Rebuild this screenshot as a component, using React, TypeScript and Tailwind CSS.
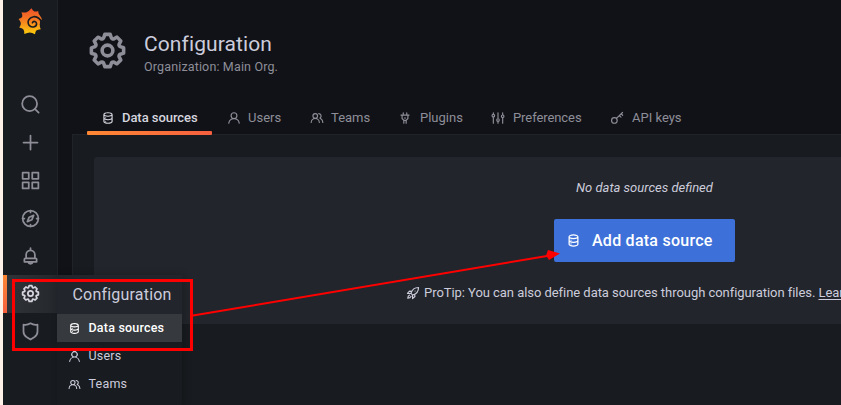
import React from "react";

type IconProps = { className?: string };

const COG =
  "M21.32,9.55l-1.89-.63.89-1.78A1,1,0,0,0,20.13,6L18,3.87a1,1,0,0,0-1.15-.19l-1.78.89-.63-1.89A1,1,0,0,0,13.5,2h-3a1,1,0,0,0-.95.68L8.92,4.57,7.14,3.68A1,1,0,0,0,6,3.87L3.87,6a1,1,0,0,0-.19,1.15l.89,1.78-1.89.63A1,1,0,0,0,2,10.5v3a1,1,0,0,0,.68.95l1.89.63-.89,1.78A1,1,0,0,0,3.87,18L6,20.13a1,1,0,0,0,1.15.19l1.78-.89.63,1.89a1,1,0,0,0,.95.68h3a1,1,0,0,0,.95-.68l.63-1.89,1.78.89A1,1,0,0,0,18,20.13L20.13,18a1,1,0,0,0,.19-1.15l-.89-1.78,1.89-.63A1,1,0,0,0,22,13.5v-3A1,1,0,0,0,21.32,9.55ZM20,12.78l-1.2.4A2,2,0,0,0,17.64,16l.57,1.14-1.1,1.1L16,17.64a2,2,0,0,0-2.79,1.16l-.4,1.2H11.22l-.4-1.2A2,2,0,0,0,8,17.64l-1.14.57-1.1-1.1L6.36,16A2,2,0,0,0,5.2,13.18L4,12.78V11.22l1.2-.4A2,2,0,0,0,6.36,8L5.79,6.89l1.1-1.1L8,6.36A2,2,0,0,0,10.82,5.2l.4-1.2h1.56l.4,1.2A2,2,0,0,0,16,6.36l1.14-.57,1.1,1.1L17.64,8a2,2,0,0,0,1.16,2.79l1.2.4ZM12,8a4,4,0,1,0,4,4A4,4,0,0,0,12,8Zm0,6a2,2,0,1,1,2-2A2,2,0,0,1,12,14Z";
const DATABASE =
  "M8,16.5a1,1,0,1,0,1,1A1,1,0,0,0,8,16.5ZM12,2C8,2,4,3.37,4,6V18c0,2.63,4,4,8,4s8-1.37,8-4V6C20,3.37,16,2,12,2Zm6,16c0,.71-2.28,2-6,2s-6-1.29-6-2V14.73A13.16,13.16,0,0,0,12,16a13.16,13.16,0,0,0,6-1.27Zm0-6c0,.71-2.28,2-6,2s-6-1.29-6-2V8.73A13.16,13.16,0,0,0,12,10a13.16,13.16,0,0,0,6-1.27ZM12,8C8.28,8,6,6.71,6,6s2.28-2,6-2,6,1.29,6,2S15.72,8,12,8ZM8,10.5a1,1,0,1,0,1,1A1,1,0,0,0,8,10.5Z";
const USER =
  "M15.71,12.71a6,6,0,1,0-7.42,0,10,10,0,0,0-6.22,8.18,1,1,0,0,0,2,.22,8,8,0,0,1,15.9,0,1,1,0,0,0,1,.89h.11a1,1,0,0,0,.88-1.1A10,10,0,0,0,15.71,12.71ZM12,12a4,4,0,1,1,4-4A4,4,0,0,1,12,12Z";
const USERS =
  "M12.3,12.22A4.92,4.92,0,0,0,14,8.5a5,5,0,0,0-10,0,4.92,4.92,0,0,0,1.7,3.72A8,8,0,0,0,1,19.5a1,1,0,0,0,2,0,6,6,0,0,1,12,0,1,1,0,0,0,2,0A8,8,0,0,0,12.3,12.22ZM9,11.5a3,3,0,1,1,3-3A3,3,0,0,1,9,11.5Zm9.74.32A5,5,0,0,0,15,3.5a1,1,0,0,0,0,2,3,3,0,0,1,3,3,3,3,0,0,1-1.5,2.59,1,1,0,0,0-.5.84,1,1,0,0,0,.45.86l.39.26.13.07a7,7,0,0,1,4,6.38,1,1,0,0,0,2,0A9,9,0,0,0,18.74,11.82Z";
const PLUG =
  "M19,6H16V3a1,1,0,0,0-2,0V6H10V3A1,1,0,0,0,8,3V6H5A1,1,0,0,0,5,8H6v5a1,1,0,0,0,.29.71L9,16.41V21a1,1,0,0,0,2,0V17h2v4a1,1,0,0,0,2,0V16.41l2.71-2.7A1,1,0,0,0,18,13V8h1a1,1,0,0,0,0-2Zm-3,6.59L13.59,15H10.41L8,12.59V8h8ZM11,13h2a1,1,0,0,0,0-2H11a1,1,0,0,0,0,2Z";

const Solid = ({ d, className }: { d: string; className?: string }) => (
  <svg viewBox="0 0 24 24" fill="currentColor" className={`shrink-0 ${className ?? ""}`}>
    <path d={d} />
  </svg>
);

const Line = ({ className, children }: IconProps & { children: React.ReactNode }) => (
  <svg
    viewBox="0 0 24 24"
    fill="none"
    stroke="currentColor"
    strokeWidth={2}
    strokeLinecap="round"
    strokeLinejoin="round"
    className={`shrink-0 ${className ?? ""}`}
  >
    {children}
  </svg>
);

const Logo = () => (
  <svg viewBox="0 0 76 84" className="h-[27px] w-[25px]">
    <defs>
      <linearGradient id="brand" x1="0" y1="0" x2="0" y2="1">
        <stop offset="0" stopColor="#f0502a" />
        <stop offset="0.45" stopColor="#f57a22" />
        <stop offset="1" stopColor="#fdd00a" />
      </linearGradient>
    </defs>
    <path
      d="M41 1Q45 8 50 11Q56 12 62 9Q62 16 65 20Q73 28 74 42L67 50Q66 58 70 66Q60 67 56 70Q53 74 52 82Q43 76 36 76Q28 76 19 81Q19 71 16 67Q12 62 3 61Q9 53 8 47Q7 41 1 34Q10 32 12 28Q14 23 10 13Q20 15 26 13Q34 10 41 1Z"
      fill="url(#brand)"
    />
    <path
      d="M76 49C69 34 59 25 47 27C33 29 27 43 33 53C40 63 57 60 57 49C56 41 47 39 44 46"
      fill="none"
      stroke="#181b1f"
      strokeWidth="5"
      strokeLinecap="round"
    />
    <path d="M68 35 76 40 76 62 67 52Z" fill="#181b1f" />
  </svg>
);

const Search = () => (
  <Line className="size-[21px]">
    <circle cx="11" cy="11" r="8.5" />
    <path d="M17.2 17.2 21.3 21.3" />
  </Line>
);
const Plus = () => (
  <Line className="size-[21px]">
    <path d="M12 4v16M4 12h16" />
  </Line>
);
const Apps = () => (
  <Line className="size-[21px]">
    <path d="M3 3h7v7H3zM14 3h7v7h-7zM3 14h7v7H3zM14 14h7v7h-7z" />
  </Line>
);
const Compass = () => (
  <Line className="size-[21px]">
    <circle cx="12" cy="12" r="9" />
    <path d="M12 3v2M12 19v2M3 12h2M19 12h2M15.6 8.4l-5.1 2.1-2.1 5.1 5.1-2.1z" />
  </Line>
);
const Bell = () => (
  <Line className="size-[21px]">
    <path d="M12 2.5V5M7 14v-4a5 5 0 0 1 10 0v4M6 14h12a1 1 0 0 1 1 1v3H5v-3a1 1 0 0 1 1-1zM9.3 18.4a2.8 2.8 0 0 0 5.4 0" />
  </Line>
);
const Shield = () => (
  <Line className="size-[21px]">
    <path d="M4 4.2c2.9.6 5.6 0 8-1.5 2.4 1.5 5.1 2.1 8 1.5v7.7c0 2.7-1.2 4.9-3.4 6.4L12 21.2l-4.6-2.9C5.2 16.8 4 14.6 4 11.9z" />
  </Line>
);
const Sliders = ({ className }: IconProps) => (
  <Line className={className}>
    <path d="M4 3v2M4 11v10M12 3v9M12 18v3M20 3v3M20 12v9" />
    <circle cx="4" cy="8" r="2.2" />
    <circle cx="12" cy="15.5" r="2.2" />
    <circle cx="20" cy="9" r="2.2" />
  </Line>
);
const Key = ({ className }: IconProps) => (
  <Line className={className}>
    <circle cx="7.5" cy="16.2" r="4.8" />
    <path d="M11 12.7 21.5 2.5M16 7.8l2.8 2.8M19.2 4.8l2.5 2.5" />
  </Line>
);
const Rocket = ({ className }: IconProps) => (
  <Line className={className}>
    <path d="M8.5 12.5C10.5 6 15 2.5 21.5 2.5 21.5 9 18 13.5 11.5 15.5zM9.5 9.2 6 8.7 2.5 12.7l6 .2M14.8 14.5l.5 3.5-4 3.5-.2-6M6.3 15.5c-2.3.8-3.2 2.8-3.3 5.5 2.7-.1 4.7-1 5.5-3.3" />
    <path d="M15.5 8.5v.1" />
  </Line>
);

const Sidebar = () => (
  <nav className="flex h-full w-[55px] shrink-0 flex-col border-r border-[#202328] bg-[#181b1f] text-[#8e8e99]">
    <div className="flex h-[85px] shrink-0 justify-center pt-[8px]">
      <Logo />
    </div>
    {[Search, Plus, Apps, Compass, Bell].map((Icon, i) => (
      <div key={i} className="flex h-[38px] shrink-0 items-center justify-center">
        <Icon />
      </div>
    ))}
    <div className="flex h-[38px] shrink-0 text-[#d5d5df]">
      <div className="w-1 bg-linear-to-b from-[#ff8833] to-[#f55f3e]" />
      <div className="flex flex-1 items-center justify-center bg-linear-to-r from-[#303338] to-[#24272c] pb-[2px] pr-1">
        <Solid d={COG} className="size-[21px]" />
      </div>
    </div>
    <div className="flex h-[38px] shrink-0 items-center justify-center pb-[2px]">
      <Shield />
    </div>
  </nav>
);

const tabIcon = "mr-[7px] size-[14px]";

const Tabs = () => (
  <div className="z-10 flex h-[32px] shrink-0 pl-[29px] text-[13px] leading-none text-[#8e8e99]">
    <div className="flex w-[125px] flex-col font-medium tracking-[-0.06px] text-[#d5d5df]">
      <div className="flex h-[29px] shrink-0 items-center pl-[14px] pt-[2px]">
        <Solid d={DATABASE} className={tabIcon} />
        Data sources
      </div>
      <div className="h-[4px] shrink-0 rounded-[1px] bg-linear-to-r from-[#ff8833] to-[#f55f3e]" />
    </div>
    <div className="flex h-[29px] w-[83px] items-center pl-[15px] pt-[2px]">
      <Solid d={USER} className={tabIcon} />
      Users
    </div>
    <div className="flex h-[29px] w-[89px] items-center pl-[15px] pt-[2px]">
      <Solid d={USERS} className={tabIcon} />
      Teams
    </div>
    <div className="flex h-[29px] w-[93px] items-center pl-[14px] pt-[2px]">
      <Solid d={PLUG} className="mr-[8px] size-[14px]" />
      Plugins
    </div>
    <div className="flex h-[29px] w-[119px] items-center pl-[14px] pt-[2px] tracking-[-0.08px]">
      <Sliders className="mr-[8px] size-[14px]" />
      Preferences
    </div>
    <div className="flex h-[29px] items-center pl-[14px] pt-[2px]">
      <Key className="mr-[8px] size-[14px]" />
      API keys
    </div>
  </div>
);

const Main = () => (
  <main className="flex min-w-0 flex-1 flex-col bg-[#111217]">
    <header className="flex h-[102px] shrink-0 pl-[28px] pt-[28px]">
      <Solid d={COG} className="mt-[0.5px] size-[43px] text-[#8e8e99]" />
      <div className="pl-[15px]">
        <h1 className="mt-[3px] text-[21px] leading-[26px] tracking-[0.1px] text-[#ccccdc]">Configuration</h1>
        <p className="mt-[2px] text-[12.5px] leading-[15px] tracking-[0.15px] text-[#8e8e99]">Organization: Main Org.</p>
      </div>
    </header>
    <Tabs />
    <section className="ml-[14px] flex-1 border-l border-t border-[#202328] bg-[#181b1f] pl-[21px] pt-[22px]">
      <div className="flex h-[167px] flex-col rounded-tl-[3px] bg-[#22252b] text-[#ccccdc]">
        <div className="flex w-[1101px] flex-col items-center">
          <p className="mt-[23px] text-[13px] italic leading-4">No data sources defined</p>
          <button className="mt-[23px] flex h-[43px] w-[181px] items-center rounded-[2px] bg-[#3d71d9] pl-[12px] text-[16px] font-medium tracking-[0.25px] text-white">
            <Solid d={DATABASE} className="mr-[11px] size-[15px]" />
            Add data source
          </button>
        </div>
        <p className="mt-[23px] flex items-center overflow-hidden whitespace-nowrap pl-[312px] text-[13px] leading-4 tracking-[-0.05px]">
          <Rocket className="mr-[4px] size-[14px]" />
          ProTip: You can also define data sources through configuration files.&nbsp;
          <span className="underline underline-offset-2">Learn more</span>
        </p>
      </div>
    </section>
  </main>
);

const Flyout = () => (
  <div className="absolute left-[57px] top-[275px] h-[130px] w-[125px] bg-[#181b1f] text-[12.5px] tracking-[0.2px] text-[#ccccdc] shadow-[2px_0_8px_rgba(0,0,0,0.2)]">
    <div className="flex h-[39px] items-center bg-[#22252b] pl-[15.5px] text-[16px]">Configuration</div>
    <div className="flex h-[28px] items-center bg-[#36393d] pl-[11px] font-medium text-white">
      <Solid d={DATABASE} className="mr-[7.5px] size-[13px]" />
      Data sources
    </div>
    <div className="flex h-[28px] items-center pl-[11px]">
      <Solid d={USER} className="mr-[7.5px] size-[13px]" />
      Users
    </div>
    <div className="flex h-[28px] items-center pl-[11px]">
      <Solid d={USERS} className="mr-[7.5px] size-[13px]" />
      Teams
    </div>
  </div>
);

const Annotation = () => (
  <svg className="absolute left-0 top-0 z-20" width="841" height="405" fill="none">
    <rect x="13.5" y="280.5" width="178" height="69" stroke="#ff0000" strokeWidth="3" />
    <path d="M190 316 550 255.5" stroke="#ff0000" strokeWidth="2" />
    <path d="M560 253.5 548 250 546 255.5 549 260z" fill="#ff0000" />
  </svg>
);

export default function App() {
  return (
    <div className="relative flex h-[405px] w-[841px] overflow-hidden bg-[#fdf1e8] pl-[3px] font-[Roboto,sans-serif]">
      <Sidebar />
      <Main />
      <Flyout />
      <Annotation />
    </div>
  );
}
